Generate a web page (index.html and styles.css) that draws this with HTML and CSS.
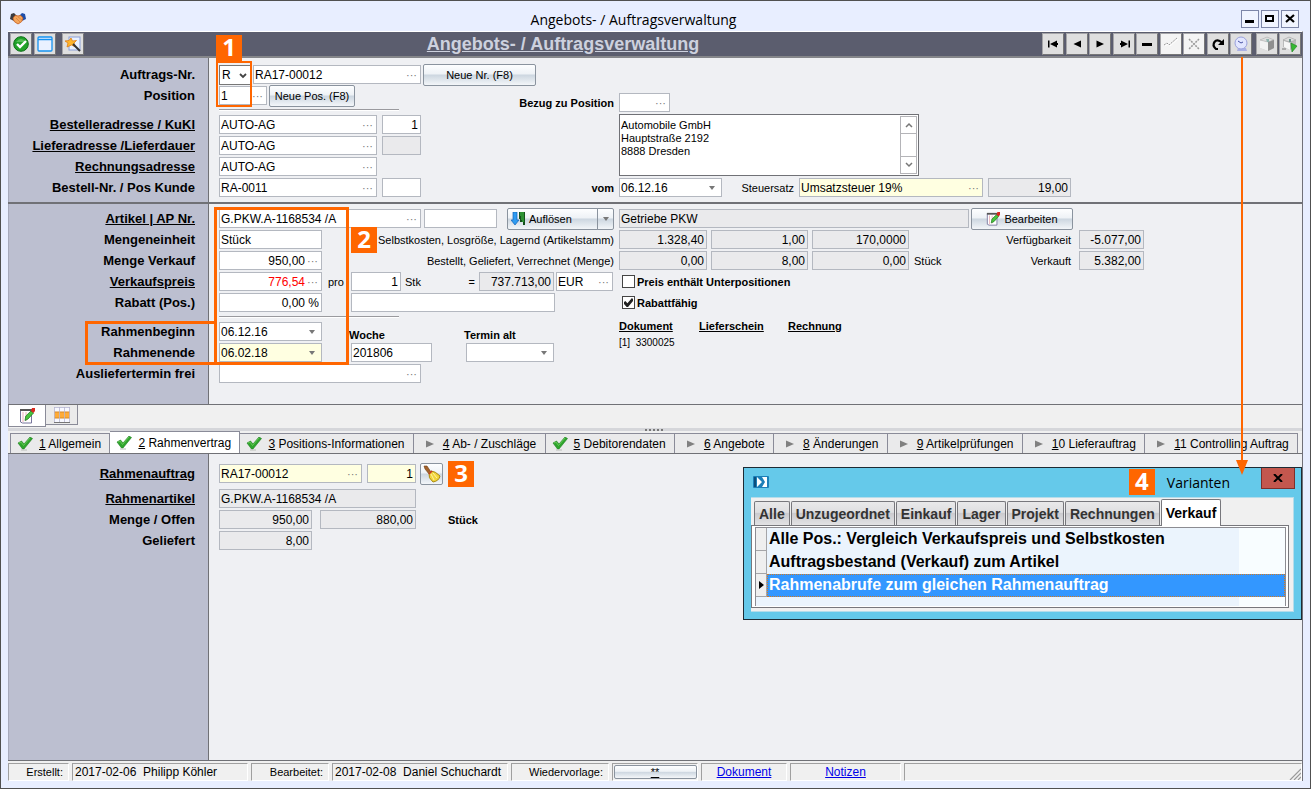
FILE: index.html
```html
<!DOCTYPE html>
<html lang="de">
<head>
<meta charset="utf-8">
<title>Angebots- / Auftragsverwaltung</title>
<link rel="stylesheet" href="styles.css">
</head>
<body>
<svg class="defs" aria-hidden="true">
  <symbol id="i-check" viewBox="0 0 16 14"><path d="M1 6L4.500 4l2.500 3L13 0l2.500 1.500L7 12H5.500z" fill="#2fa52d" stroke="#1b7d1c" stroke-width=".6"/><path d="M2 6l2-1 2.500 3.500L13 1" fill="none" stroke="#72d060" stroke-width=".8"/><path d="M4 13h6" stroke="#b9bdb9"/></symbol>
  <symbol id="i-arrow" viewBox="0 0 8 8"><path d="M0 0.500L8 4 0 7.500z" fill="#808080"/></symbol>
  <symbol id="i-edit" viewBox="0 0 16 16"><path d="M1.500 2h11v13H3.500L1.500 14z" fill="#fff" stroke="#77759c"/><path d="M1 1h12v2H1z" fill="#555"/><path d="M4 4v10M7 4v9" stroke="#e7a0a8" stroke-width=".8"/><path d="M6 12.500l.8-4.500L12 3l2.500 2-5.500 6z" fill="#49c53d" stroke="#217c22" stroke-width=".8"/><path d="M12 3l1-3h3v3l-1.500 2z" fill="#d9281d"/></symbol>
  <symbol id="i-down" viewBox="0 0 6 4"><path d="M0 0h6L3 4z" fill="#777"/></symbol>
</svg>

<div class="window">
  <header class="titlebar">
    <svg class="app-icon" viewBox="0 0 16 12"><path d="M1 1l3-1 3 3-3 5-4-2z" fill="#3b3b3f"/><path d="M15 1l-3-1-3 3 3 5 4-2z" fill="#1d4da8"/><path d="M3 5q2-4 5-2 3-2 5 2 0 4-5 6-5-2-5-6z" fill="#f4a65c" stroke="#c45d22" stroke-width=".8"/><path d="M6 5l4 4M8 4l4 3" stroke="#d97b34" stroke-width=".7"/></svg>
    <h1>Angebots- / Auftragsverwaltung</h1>
    <div class="win-buttons">
      <button aria-label="Minimieren"><svg viewBox="0 0 16 16"><path d="M3 9h9v3H3z"/></svg></button>
      <button aria-label="Maximieren"><svg viewBox="0 0 16 16"><path d="M3 4h9v7H3zM5 6v3h5V6z" fill-rule="evenodd"/></svg></button>
      <button aria-label="Schließen"><svg viewBox="0 0 16 16"><path d="M4 4l8 7M12 4l-8 7" stroke="#000" stroke-width="2.200"/></svg></button>
    </div>
  </header>

  <div class="client">
    <div class="toolbar">
      <div class="tools tools-left">
        <button aria-label="Übernehmen"><svg viewBox="0 0 16 16"><circle cx="8" cy="8" r="7.300" fill="#21a329" stroke="#0b6c15"/><path d="M3 6q5-6 10 0" fill="#7ad476" opacity=".6"/><path d="M4 8l3 3 6-6" fill="none" stroke="#fff" stroke-width="2.400"/></svg></button>
        <button aria-label="Fenster"><svg viewBox="0 0 16 16"><rect x="1" y="1" width="14" height="14" rx="1" fill="#eaf1ff" stroke="#1592f0" stroke-width="1.300"/><path d="M1 3.500h14" stroke="#1592f0" stroke-width="1.500"/></svg></button>
        <button aria-label="Assistent" class="wand"><svg viewBox="0 0 16 16"><rect x="4" y="1" width="11" height="13" fill="#e9f1ff" stroke="#8b9fd8"/><path d="M6 2l1.500 3 4-.5L9 7l1.500 4L6.500 9 2 11l1-4L0 5l4-.5z" fill="#ffb52b" stroke="#dc7e15" stroke-width=".8"/><path d="M8 8l7 7" stroke="#333" stroke-width="2"/></svg></button>
      </div>
      <h2>Angebots- / Auftragsverwaltung</h2>
      <div class="tools tools-right">
        <button aria-label="Erster"><svg viewBox="0 0 16 16"><path d="M3 4.500h1.500v7H3zM12 4.500v7L5 8z"/><path d="M10 7h3v2h-3z"/></svg></button>
        <button aria-label="Zurück"><svg viewBox="0 0 16 16"><path d="M12 4.500v7L4.500 8z"/></svg></button>
        <button aria-label="Weiter"><svg viewBox="0 0 16 16"><path d="M4.500 4.500v7L12 8z"/></svg></button>
        <button aria-label="Letzter"><svg viewBox="0 0 16 16"><path d="M12.500 4.500H14v7h-1.500zM5 4.500v7L12 8z"/><path d="M4 7h3v2H4z"/></svg></button>
        <button aria-label="Löschen"><svg viewBox="0 0 16 16"><path d="M3 7h10v3H3z"/></svg></button>
        <button aria-label="Speichern" disabled><svg viewBox="0 0 16 16"><path d="M2 10l3-2 2 2 8-7" fill="none" stroke="#fff"/><path d="M1 9l3-2 2 2 8-7" fill="none" stroke="#999" stroke-dasharray="2 1"/></svg></button>
        <button aria-label="Abbrechen" disabled><svg viewBox="0 0 16 16"><path d="M3 3l10 10M13 3L3 13" fill="none" stroke="#999" stroke-width="1.500" stroke-dasharray="2 1"/></svg></button>
        <button aria-label="Aktualisieren"><svg viewBox="0 0 16 16"><path d="M8 13H6Q2 9.500 4.500 6T12 6.500" fill="none" stroke="#000" stroke-width="2.200"/><path d="M14 3v6H8z"/></svg></button>
        <button aria-label="Varianten"><svg viewBox="0 0 16 16"><path d="M5 12h8l1 3H4z" fill="#aab0e5"/><circle cx="8" cy="7" r="6" fill="#e2e6ff" stroke="#9aa1dc"/><path d="M5 5l3 2 2-1" fill="none" stroke="#4752a4"/></svg></button>
        <button aria-label="Paket" class="box"><svg viewBox="0 0 16 16"><path d="M1 4l7-3 7 3v8l-6 3-8-3z" fill="#b8b8b8"/><path d="M1 4l8 2v9l-8-3z" fill="#f2f2f2"/><path d="M1 4l7-3 7 3-6 2z" fill="#ddd" stroke="#aaa" stroke-width=".5"/><path d="M9 6l6-2v8l-6 3z" fill="#8f8f8f"/><path d="M7 3h3v3H8z" fill="#8fb3ae"/></svg></button>
        <button aria-label="Paket starten"><svg viewBox="0 0 16 16"><path d="M1 4l6-3 7 3v7l-6 3-7-3z" fill="#bbb"/><path d="M2 5l6 2v7l-6-3z" fill="#f6f6f6"/><path d="M1 4l6-3 7 3-6 2z" fill="#ddd" stroke="#999" stroke-width=".5"/><path d="M7 3h2v3H7z" fill="#6f918c"/><path d="M0 13h4" stroke="#777"/><path d="M9 7l6 3-5 6z" fill="#35b932" stroke="#198019" stroke-width=".6"/></svg></button>
      </div>
    </div>

    <form class="section order">
      <div class="labels">
        <label for="nr">Auftrags-Nr.</label>
        <label for="pos">Position</label>
        <span class="rule"></span>
        <a href="#"><label for="best">Bestelleradresse / KuKl</label></a>
        <a href="#"><label for="lief">Lieferadresse /Lieferdauer</label></a>
        <a href="#"><label for="rech">Rechnungsadresse</label></a>
        <label for="bnr">Bestell-Nr. / Pos Kunde</label>
      </div>
      <div class="left">
        <div class="row close-set">
          <span class="select"><select aria-label="Art"><option>R</option></select><svg viewBox="0 0 8 6"><path d="M1 1l3 3 3-3" fill="none" stroke="#444" stroke-width="1.800"/></svg></span>
          <span class="field w168"><input id="nr" value="RA17-00012"><button type="button" aria-label="Suchen">···</button></span>
          <button type="button" class="btn w113">Neue Nr. (F8)</button>
        </div>
        <div class="row close-set">
          <span class="field w48"><input id="pos" value="1"><button type="button" aria-label="Suchen">···</button></span>
          <button type="button" class="btn w86">Neue Pos. (F8)</button>
        </div>
        <hr class="rule">
        <div class="row pair"><span class="field w158"><input id="best" value="AUTO-AG"><button type="button" aria-label="Suchen">···</button></span><span class="field num w39"><input aria-label="KuKl" value="1"></span></div>
        <div class="row pair"><span class="field w158"><input id="lief" value="AUTO-AG"><button type="button" aria-label="Suchen">···</button></span><span class="field ro w39"><input aria-label="Lieferdauer" readonly></span></div>
        <div class="row"><span class="field w158"><input id="rech" value="AUTO-AG"><button type="button" aria-label="Suchen">···</button></span></div>
        <div class="row pair"><span class="field w158"><input id="bnr" value="RA-0011"><button type="button" aria-label="Suchen">···</button></span><span class="field w39"><input aria-label="Pos Kunde"></span></div>
      </div>
      <div class="right reference">
        <label class="strong" for="bezug">Bezug zu Position</label>
        <span class="field w51"><input id="bezug"><button type="button" aria-label="Suchen">···</button></span>
        <div class="address">
          <textarea aria-label="Adresse">Automobile GmbH
Hauptstraße 2192
8888 Dresden</textarea>
          <div class="scroll">
            <button type="button" aria-label="Nach oben"><svg viewBox="0 0 8 6"><path d="M1 5l3-3 3 3" fill="none" stroke="#777" stroke-width="1.500"/></svg></button>
            <button type="button" aria-label="Nach unten"><svg viewBox="0 0 8 6"><path d="M1 1l3 3 3-3" fill="none" stroke="#777" stroke-width="1.500"/></svg></button>
          </div>
        </div>
        <label class="strong" for="vom">vom</label>
        <div class="row pair">
          <span class="field w103"><input id="vom" value="06.12.16"><button type="button" aria-label="Kalender"><svg viewBox="0 0 6 4"><use href="#i-down"/></svg></button></span>
          <label class="small tax" for="steuer">Steuersatz</label>
          <span class="field req w184"><input id="steuer" value="Umsatzsteuer 19%"><button type="button" aria-label="Suchen">···</button></span>
          <span class="field ro num w83"><input aria-label="Steuersatz Prozent" value="19,00" readonly></span>
        </div>
      </div>
    </form>

    <form class="section article">
      <div class="labels">
        <a href="#"><label for="art">Artikel | AP Nr.</label></a>
        <label for="me">Mengeneinheit</label>
        <label for="mv">Menge Verkauf</label>
        <a href="#"><label for="vp">Verkaufspreis</label></a>
        <label for="rab">Rabatt (Pos.)</label>
        <span class="rule"></span>
        <label for="rb">Rahmenbeginn</label>
        <label for="re">Rahmenende</label>
        <label for="ausl">Ausliefertermin frei</label>
      </div>
      <div class="left">
        <div class="row">
          <span class="field w202"><input id="art" value="G.PKW.A-1168534 /A"><button type="button" aria-label="Suchen">···</button></span>
          <span class="field w73"><input aria-label="AP Nr."></span>
          <span class="split"><button type="button" class="btn"><svg viewBox="0 0 14 14"><path d="M2 0h4v8h2l-4 5-4-5h2z" fill="#2e9bf0" stroke="#1363b8" stroke-width=".7"/><path d="M8 0h6v13h-2v-3H9V7H8z" fill="#14511b"/><path d="M9 1h4M9 3h4M10 5h3M10 7h3M11 9h2" stroke="#46d34c"/></svg>Auflösen</button><button type="button" class="btn drop" aria-label="Mehr"><svg viewBox="0 0 6 4"><use href="#i-down"/></svg></button></span>
        </div>
        <div class="row"><span class="field w103"><input id="me" value="Stück"></span><span class="small end">Selbstkosten, Losgröße, Lagernd (Artikelstamm)</span></div>
        <div class="row"><span class="field num w103"><input id="mv" value="950,00"><button type="button" aria-label="Suchen">···</button></span><span class="small end">Bestellt, Geliefert, Verrechnet (Menge)</span></div>
        <div class="row tight">
          <span class="field num red w103"><input id="vp" value="776,54"><button type="button" aria-label="Suchen">···</button></span>
          <span class="small pro">pro</span>
          <span class="field num w50"><input aria-label="Preiseinheit" value="1"></span>
          <span class="small stk"><span>Stk</span><span>=</span></span>
          <span class="field ro num w75"><input aria-label="Gesamtpreis" value="737.713,00" readonly></span>
          <span class="field cur"><input aria-label="Währung" value="EUR"><button type="button" aria-label="Suchen">···</button></span>
        </div>
        <div class="row tight"><span class="field num w103"><input id="rab" value="0,00 %"></span><span class="pro"></span><span class="field w204"><input aria-label="Rabatttext"></span></div>
        <hr class="rule">
        <div class="row tight dates">
          <span class="field w103"><input id="rb" value="06.12.16"><button type="button" aria-label="Kalender"><svg viewBox="0 0 6 4"><use href="#i-down"/></svg></button></span>
          <label class="strong week" for="woche">Woche</label><label class="strong" for="talt">Termin alt</label>
        </div>
        <div class="row tight">
          <span class="field req w103"><input id="re" value="06.02.18"><button type="button" aria-label="Kalender"><svg viewBox="0 0 6 4"><use href="#i-down"/></svg></button></span><span class="pro"></span>
          <span class="field w81"><input id="woche" value="201806"></span>
          <span class="field old"><input id="talt"><button type="button" aria-label="Kalender"><svg viewBox="0 0 6 4"><use href="#i-down"/></svg></button></span>
        </div>
        <div class="row"><span class="field w202"><input id="ausl"><button type="button" aria-label="Suchen">···</button></span></div>
      </div>
      <div class="right">
        <div class="row close-set">
          <span class="field ro w350"><input aria-label="Bezeichnung" value="Getriebe PKW" readonly></span>
          <button type="button" class="btn w102"><svg viewBox="0 0 16 16"><use href="#i-edit"/></svg>Bearbeiten</button>
        </div>
        <div class="row figures">
          <span class="field ro num w88"><input aria-label="Selbstkosten" value="1.328,40" readonly></span>
          <span class="field ro num w97"><input aria-label="Losgröße" value="1,00" readonly></span>
          <span class="field ro num w97"><input aria-label="Lagernd" value="170,0000" readonly></span>
          <span class="small note"><span></span><label for="verf">Verfügbarkeit</label></span>
          <span class="field ro num w65"><input id="verf" value="-5.077,00" readonly></span>
        </div>
        <div class="row figures">
          <span class="field ro num w88"><input aria-label="Bestellt" value="0,00" readonly></span>
          <span class="field ro num w97"><input aria-label="Geliefert" value="8,00" readonly></span>
          <span class="field ro num w97"><input aria-label="Verrechnet" value="0,00" readonly></span>
          <span class="small note"><span>Stück</span><label for="verk">Verkauft</label></span>
          <span class="field ro num w65"><input id="verk" value="5.382,00" readonly></span>
        </div>
        <label class="row check"><input type="checkbox">Preis enthält Unterpositionen</label>
        <label class="row check"><input type="checkbox" checked>Rabattfähig</label>
        <div class="docs">
          <a href="#">Dokument</a><a href="#">Lieferschein</a><a href="#">Rechnung</a>
          <span>[1]&nbsp; 3300025</span>
        </div>
      </div>
    </form>

    <div class="views">
      <button class="on" aria-label="Formular"><svg viewBox="0 0 16 16"><use href="#i-edit"/></svg></button>
      <button aria-label="Tabelle"><svg viewBox="0 0 16 16"><path d="M0 0h16v16H0z" fill="#f7f8ff"/><path d="M0 5h16v6H0z" fill="#ffab36"/><path d="M0 5h16M0 11h16" stroke="#d88c28"/><path d="M.5 0v16M5.500 0v16M10.500 0v16M15.500 0v16M0 .5h16" stroke="#b5b5d0" stroke-width=".8"/><path d="M0 15.500h16" stroke="#777"/></svg></button>
    </div>
    <div class="splitter"><span></span></div>

    <nav class="tabs">
      <button><svg class="ok" viewBox="0 0 16 14"><use href="#i-check"/></svg><span><u>1</u> Allgemein</span></button>
      <button class="on"><svg class="ok" viewBox="0 0 16 14"><use href="#i-check"/></svg><span><u>2</u> Rahmenvertrag</span></button>
      <button><svg class="ok" viewBox="0 0 16 14"><use href="#i-check"/></svg><span><u>3</u> Positions-Informationen</span></button>
      <button><svg viewBox="0 0 8 8"><use href="#i-arrow"/></svg><span><u>4</u> Ab- / Zuschläge</span></button>
      <button><svg class="ok" viewBox="0 0 16 14"><use href="#i-check"/></svg><span><u>5</u> Debitorendaten</span></button>
      <button><svg viewBox="0 0 8 8"><use href="#i-arrow"/></svg><span><u>6</u> Angebote</span></button>
      <button><svg viewBox="0 0 8 8"><use href="#i-arrow"/></svg><span><u>8</u> Änderungen</span></button>
      <button><svg viewBox="0 0 8 8"><use href="#i-arrow"/></svg><span><u>9</u> Artikelprüfungen</span></button>
      <button><svg viewBox="0 0 8 8"><use href="#i-arrow"/></svg><span><u>1</u>0 Lieferauftrag</span></button>
      <button><svg viewBox="0 0 8 8"><use href="#i-arrow"/></svg><span><u>1</u>1 Controlling Auftrag</span></button>
    </nav>

    <form class="section frame">
      <div class="labels">
        <a href="#" class="first"><label for="ra">Rahmenauftrag</label></a>
        <a href="#"><label for="rart">Rahmenartikel</label></a>
        <label for="mo">Menge / Offen</label>
        <label for="gel">Geliefert</label>
      </div>
      <div class="left">
        <div class="row pair first">
          <span class="field req w143"><input id="ra" value="RA17-00012"><button type="button" aria-label="Suchen">···</button></span>
          <span class="field req num w49"><input aria-label="Rahmenposition" value="1"></span>
          <button type="button" class="btn broom" aria-label="Leeren"><svg viewBox="0 0 18 18"><path d="M1 1l3 0 4 6-2 2-4-5z" fill="#a3622b" stroke="#6e3d15" stroke-width=".6"/><path d="M8 6q4 0 9 5-1 5-7 6-5-4-4-9z" fill="#f1d53b" stroke="#a98912"/><path d="M6 9l3-3" stroke="#c5322a" stroke-width="1.500"/><path d="M8 9l3 6M10 8l4 5" stroke="#fff3a0"/></svg></button>
          <span class="badge">3</span>
        </div>
        <div class="row"><span class="field ro w197"><input id="rart" value="G.PKW.A-1168534 /A" readonly></span></div>
        <div class="row qty"><span class="field ro num w93"><input id="mo" value="950,00" readonly></span><span class="field ro num w96"><input aria-label="Offen" value="880,00" readonly></span><span class="strong unit">Stück</span></div>
        <div class="row"><span class="field ro num w93"><input id="gel" value="8,00" readonly></span></div>
      </div>
    </form>

    <footer class="status">
      <span class="s-a">Erstellt:</span>
      <span class="s-b">2017-02-06&nbsp; Philipp Köhler</span>
      <span class="s-c">Bearbeitet:</span>
      <span class="s-b">2017-02-08&nbsp; Daniel Schuchardt</span>
      <span class="s-d">Wiedervorlage:</span>
      <span class="s-e"><button class="btn"><u>**</u></button></span>
      <span class="s-e"><a href="#">Dokument</a></span>
      <span class="s-f"><a href="#">Notizen</a></span>
      <span class="s-g"><svg viewBox="0 0 12 12"><path d="M1 12L12 1M5 12l7-7M9 12l3-3" stroke="#999" stroke-width="1.200"/></svg></span>
    </footer>
  </div>

  <section class="popup">
    <div class="popup-title">
      <svg class="pop-icon" viewBox="0 0 16 12"><rect width="16" height="12" rx="1" fill="#1c7fb8"/><path d="M1 1h2v10H1z" fill="#0d4f7c"/><path d="M4 1v10l5-5zM9 1h5v10H9l3-5z" fill="#fff"/></svg>
      <span class="badge">4</span>
      <h3>Varianten</h3>
      <button class="close" aria-label="Schließen"><svg viewBox="0 0 10 8"><path d="M1 0l8 8M9 0L1 8" stroke="#000" stroke-width="2"/></svg></button>
    </div>
    <div class="popup-body">
      <nav class="cats">
        <button>Alle</button><button>Unzugeordnet</button><button>Einkauf</button><button>Lager</button><button>Projekt</button><button>Rechnungen</button><button class="on">Verkauf</button>
      </nav>
      <div class="list">
        <table>
          <tr><th></th><td>Alle Pos.: Vergleich Verkaufspreis und Selbstkosten</td></tr>
          <tr><th></th><td>Auftragsbestand (Verkauf) zum Artikel</td></tr>
          <tr class="sel"><th><svg viewBox="0 0 5 8"><path d="M0 0l5 4-5 4z"/></svg></th><td>Rahmenabrufe zum gleichen Rahmenauftrag</td></tr>
        </table>
      </div>
    </div>
  </section>

  <div class="mark mark-nr"></div>
  <div class="mark mark-values"></div>
  <div class="mark mark-dates"></div>
  <span class="badge badge-1">1</span>
  <span class="badge badge-2">2</span>
  <div class="pointer"></div>
</div>
</body>
</html>
```

FILE: styles.css
```css
* { box-sizing: border-box; }
body { margin: 0; font: 12px "Liberation Sans", Arial, sans-serif; color: #000; }
h1, h2, h3 { margin: 0; }
button, input, select, textarea { font: inherit; color: inherit; margin: 0; padding: 0; border: 0; background: none; border-radius: 0; }
button { flex: none; }
svg { display: block; flex: none; }
.defs { position: absolute; width: 0; height: 0; }

.window { position: relative; display: flex; flex-direction: column; min-height: 100vh; padding: 0 7px 7px; border: 1px solid #505050; background: #e8eeff; }
.titlebar { display: flex; align-items: center; height: 30px; padding: 6px 4px 0 2px; }
.titlebar h1 { flex: 1; text-align: center; font: 14px "Open Sans", sans-serif; }
.app-icon { width: 16px; height: 12px; }
.win-buttons { display: flex; gap: 2px; }
.win-buttons button { width: 18px; height: 18px; border: 1px solid #7d86a8; background: #f0f4ff; }
.win-buttons svg { width: 16px; height: 16px; }

.client { flex: 1; display: flex; flex-direction: column; border-top: 1px solid #fff; border-right: 1px solid #707078; background: #f0f0f0; }
.toolbar { display: flex; align-items: center; height: 26px; padding: 0 1px 0 2px; background: #5b5d6e; border-bottom: 2px solid #85868a; }
.toolbar h2 { flex: 1; text-align: center; font-size: 18px; line-height: 22px; font-weight: bold; text-decoration: underline; color: #cdd1de; }
.tools { display: flex; }
.tools button { display: grid; place-items: center; width: 22px; height: 22px; border: 1px solid #a5a5a8; border-right-color: #777; border-bottom-color: #777; background: #dfdfdf; }
.tools svg { width: 16px; height: 16px; }
.tools button:nth-child(even) { margin-left: 2px; }
.tools button:nth-child(odd):not(:first-child) { margin-left: 1px; }
.tools button.wand:nth-child(odd) { margin-left: 6px; }
.tools button.box:nth-child(even) { margin-left: 4px; }
.tools button:disabled { background: #f4f4f4; }

.section { display: flex; background: #eff0f3; border-bottom: 2px solid #707176; }
.labels { flex: none; width: 201px; padding: 7px 13px 5px 0; display: flex; flex-direction: column; align-items: flex-end; gap: 2px; background: #bcbfd0; border-left: 1px solid #a7aabb; border-right: 1px solid #707176; font-size: 13px; font-weight: bold; line-height: 19px; white-space: nowrap; }
.labels label { display: block; height: 19px; }
.labels a { color: #000; text-decoration: underline; }
.left { flex: none; width: 405px; padding: 7px 0 5px 10px; display: flex; flex-direction: column; gap: 2px; }
.right { flex: 1; padding: 7px 0 5px 5px; display: flex; flex-direction: column; gap: 2px; }
.rule { width: 180px; height: 2px; margin: 2px 0; border: 0; border-top: 1px solid #9a9a9e; border-bottom: 1px solid #fff; }
.labels .rule { border: 0; }
.row { display: flex; align-items: center; gap: 3px; height: 19px; }
.pair { gap: 5px; }
.tight { gap: 0; }
.close-set { gap: 2px; }

.field { display: flex; flex: none; height: 19px; border: 1px solid #b4b8c0; background: #fff; }
.field input { flex: 1; width: 0; min-width: 0; padding: 0 2px 0 1px; outline: 0; }
.field button { width: 14px; color: #777; font-size: 11px; line-height: 14px; text-align: left; display: grid; align-items: center; }
.field button svg { width: 6px; height: 4px; margin-left: 2px; }
.num input { text-align: right; }
.ro { background: #eaeaec; }
.req { background: #ffffe1; }
.red { color: #f00; }
.w39 { width: 39px; } .w48 { width: 48px; } .w49 { width: 49px; } .w50 { width: 50px; } .w51 { width: 51px; }
.w65 { width: 65px; } .w73 { width: 73px; } .w75 { width: 75px; } .w81 { width: 81px; } .w83 { width: 83px; }
.w86 { width: 86px; } .w88 { width: 88px; } .w93 { width: 93px; } .w96 { width: 96px; } .w97 { width: 97px; }
.w102 { width: 102px; } .w103 { width: 103px; } .w113 { width: 113px; } .w143 { width: 143px; } .w158 { width: 158px; }
.w168 { width: 168px; } .w184 { width: 184px; } .w197 { width: 197px; } .w202 { width: 202px; } .w204 { width: 204px; } .w350 { width: 350px; }

.btn { display: flex; align-items: center; justify-content: center; gap: 4px; height: 22px; border: 1px solid #8a939e; border-radius: 2px; background: linear-gradient(#fdfeff, #eef2f6 45%, #ccd6e0 50%, #f3f6f9); font-size: 11px; white-space: nowrap; }
.btn svg { width: 14px; height: 14px; }
.small { font-size: 11px; white-space: nowrap; }
.strong { font-size: 11px; font-weight: bold; white-space: nowrap; }
.end { margin-left: auto; }

.select { position: relative; width: 32px; height: 20px; }
.select select { width: 32px; height: 20px; padding-left: 2px; appearance: none; border: 1px solid #777; background: #fff; }
.select svg { position: absolute; right: 4px; top: 8px; width: 8px; height: 6px; pointer-events: none; }

.order .left { width: 327px; }
.reference { display: grid; grid-template-columns: 78px 1fr; grid-template-rows: 19px 62px 19px; column-gap: 5px; row-gap: 2px; align-items: center; padding: 35px 0 5px; }
.reference > label { justify-self: end; }
.address { grid-column: 2; display: flex; width: 300px; height: 62px; padding: 1px; border: 1px solid #707176; background: #fff; }
.address textarea { flex: 1; resize: none; outline: 0; overflow: hidden; padding: 3px 0 0; font-size: 11px; line-height: 13px; }
.scroll { display: flex; flex-direction: column; justify-content: space-between; width: 17px; border: 1px solid #b4b4b8; }
.scroll button { display: grid; place-items: center; height: 17px; }
.scroll button:first-child { border-bottom: 1px solid #b4b4b8; }
.scroll button:last-child { border-top: 1px solid #b4b4b8; }
.scroll svg { width: 8px; height: 6px; }
.tax { width: 67px; text-align: right; }

.article { border-bottom-width: 1px; }
.article .labels, .article .left, .article .right { padding-top: 5px; padding-bottom: 21px; }
.split { display: flex; width: 107px; margin-left: 7px; }
.split .btn { flex: 1; justify-content: flex-start; padding-left: 3px; border-radius: 2px 0 0 2px; }
.split .drop { flex: none; width: 17px; justify-content: center; padding: 0; margin-left: -1px; border-radius: 0 2px 2px 0; }
.drop svg { width: 6px; height: 4px; }
.pro { width: 29px; padding-left: 6px; }
.stk { display: flex; justify-content: space-between; width: 78px; padding: 0 4px; }
.cur { width: 57px; margin-left: 2px; }
.week { width: 115px; margin-left: 27px; }
.dates .strong { align-self: flex-end; line-height: 12px; }
.old { width: 88px; margin-left: 34px; }
.figures { gap: 4px; }
.note { display: flex; justify-content: space-between; width: 158px; padding-left: 1px; margin-right: 4px; }
.check { font-size: 11px; font-weight: bold; gap: 2px; padding-left: 3px; }
.check input { appearance: none; display: grid; place-items: center; width: 13px; height: 13px; border: 1px solid #444; background: #fff; }
.check input:checked::before { content: ""; width: 9px; height: 9px; background: #222; clip-path: polygon(0 45%, 15% 32%, 38% 58%, 88% 0, 100% 12%, 100% 32%, 45% 100%, 30% 100%, 0 68%); }
.docs { display: grid; grid-template-columns: 80px 89px auto; justify-content: start; row-gap: 3px; padding-top: 6px; font-size: 11px; line-height: 13px; }
.docs a { color: #000; font-weight: bold; }
.docs span { font-size: 10px; }

.views { display: flex; align-items: flex-start; height: 23px; }
.views button { display: grid; place-items: center; width: 32px; height: 20px; border: 1px solid #8a8b98; border-top: 0; border-left: 0; background: #ebebeb; }
.views .on { width: 38px; height: 22px; border-left: 1px solid #8a8b98; background: #fff; }
.views svg { width: 16px; height: 16px; }
.splitter { height: 3px; background: #d5d6da; display: grid; place-items: center; }
.splitter span { width: 20px; height: 2px; background: repeating-linear-gradient(90deg, #777 0 2px, #d5d6da 2px 4px); }

.tabs { display: flex; align-items: flex-end; height: 22px; padding: 0 4px 0 2px; }
.tabs button { flex: 1 1 auto; display: flex; align-items: center; height: 20px; padding-right: 4px; border: 1px solid #8a8b98; border-left: 0; border-bottom: 0; background: #eaeaeb; white-space: nowrap; }
.tabs button:first-child { border-left: 1px solid #8a8b98; }
.tabs .on { height: 22px; background: #fff; }
.tabs svg { width: 8px; height: 8px; margin: 0 9px 0 12px; }
.tabs .ok { width: 16px; height: 14px; margin: 0 6px 0 6px; }

.frame { flex: 1; border-top: 1px solid #707176; border-bottom-width: 1px; }
.frame .labels, .frame .left { padding-top: 10px; }
.frame .first { margin-bottom: 4px; }
.broom { width: 23px; margin-left: -1px; }
.broom svg { width: 18px; height: 18px; }
.qty { gap: 8px; }
.unit { margin-left: 24px; }

.status { display: flex; gap: 3px; padding-top: 2px; font-size: 12px; line-height: 17px; white-space: nowrap; }
.status > span { flex: none; height: 18px; border: 1px solid #a0a0a0; border-right-color: #fff; border-bottom-color: #fff; }
.status a { color: #0000e8; }
.s-a, .s-c, .s-d { padding-right: 5px; text-align: right; font-size: 11px; }
.s-a { width: 61px; } .s-b { width: 176px; padding-left: 2px; } .s-c { width: 78px; } .s-d { width: 98px; }
.s-e { width: 86px; text-align: center; } .s-f { width: 111px; text-align: center; }
.s-e .btn { width: 83px; height: 14px; margin: 1px auto; }
.status .s-g { flex: 1; display: flex; justify-content: flex-end; align-items: flex-end; }
.s-g svg { width: 12px; height: 12px; }

.badge { display: block; flex: none; width: 26px; height: 26px; background: #ff6600; color: #fff; font: bold 24px/24px "Open Sans", sans-serif; text-align: center; }
.badge-1 { position: absolute; left: 215px; top: 34px; }
.badge-2 { position: absolute; left: 350px; top: 226px; }
.mark { position: absolute; border: 3px solid #ff6600; pointer-events: none; }
.mark-nr { left: 215px; top: 60px; width: 36px; height: 46px; border-width: 2px; }
.mark-values { left: 213px; top: 206px; width: 135px; height: 158px; }
.mark-dates { left: 84px; top: 320px; width: 132px; height: 44px; }
.pointer { position: absolute; right: 67px; top: 56px; width: 2px; height: 406px; background: #ff6600; pointer-events: none; }
.pointer::after { content: ""; position: absolute; left: -5px; top: 403px; border: 6px solid transparent; border-top: 15px solid #ff6600; border-bottom: 0; }

.popup { position: absolute; right: 8px; top: 466px; width: 559px; padding: 0 7px 7px; border: 1px solid #1d2b35; background: #65c9ea; }
.popup-title { display: flex; align-items: flex-start; height: 29px; }
.pop-icon { width: 16px; height: 12px; margin: 8px auto 0 2px; }
.popup-title .badge { margin-top: 1px; }
.popup-title h3 { margin: 5px 31px 0 12px; font: 14px/20px "Open Sans", sans-serif; }
.close { display: grid; place-items: center; width: 34px; height: 21px; margin-right: -1px; border: 1px solid #7e2f2b; border-top: 0; background: #c3574e; }
.close svg { width: 10px; height: 8px; }
.popup-body { padding: 0 4px 3px 0; background: #f0f0f0; border: 1px solid #b5dcea; border-left: 0; }
.cats { display: flex; align-items: flex-end; gap: 1px; height: 27px; padding-left: 3px; font-size: 14px; font-weight: bold; }
.cats button { height: 24px; padding: 0 4px; border: 1px solid #77777c; border-bottom: 0; border-radius: 2px 2px 0 0; background: linear-gradient(#e9e9ea, #dedee0 45%, #cbcbcf 50%, #e2e2e4); color: #333; }
.cats .on { height: 27px; background: #fff; color: #000; margin-bottom: -1px; position: relative; }
.list { padding: 1px 2px 1px 3px; border: 1px solid #77777c; background: #fff; }
.list table { width: 100%; height: 79px; border-collapse: collapse; border: 1px solid #8c8c92; border-bottom: 0; display: block; background: linear-gradient(90deg, #ebf4fd calc(100% - 46px), #f8fdff 0); }
.list tbody { display: block; }
.list tr { display: flex; }
.list th { width: 11px; height: 23px; padding: 0 0 0 3px; display: flex; align-items: center; background: #efefef; border-right: 1px solid #a5a5a8; border-bottom: 1px solid #a5a5a8; }
.list th svg { width: 5px; height: 8px; }
.list td { flex: 1; height: 23px; padding: 0 2px; font-size: 16px; line-height: 22px; font-weight: bold; white-space: nowrap; }
.sel td { background: #3397ff; color: #fff; outline: 1px dotted #d57a20; outline-offset: -1px; }
```
